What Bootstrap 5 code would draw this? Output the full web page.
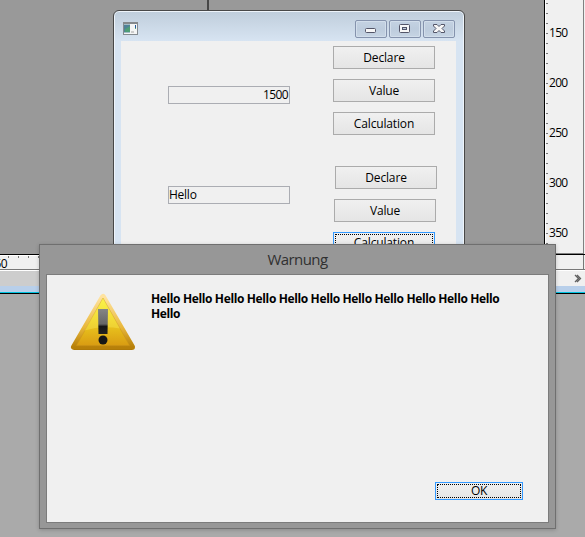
<!DOCTYPE html>
<html lang="de">
<head>
<meta charset="utf-8">
<title>Warnung</title>
<link href="https://cdn.jsdelivr.net/npm/bootstrap@5.3.0/dist/css/bootstrap.min.css" rel="stylesheet">
<style>
body{width:585px;height:537px;background:#aaa;font-family:"Open Sans","Noto Sans",sans-serif;font-size:12px;line-height:16px;color:#000}
.desk{width:585px;height:537px}
.upper{height:254px;background:#999}
.guide{width:2px;height:10px;background:#484848;margin-left:207px}
.vruler{width:41px;background:#f0f0f0;border-left:1px solid #000;box-shadow:inset 1px 0 #fff}
.vruler .scale{width:39px;border-right:1px solid #808080;border-bottom:1px solid #808080;padding-top:3px}
.mk{height:50px;padding-left:1px}
.mk svg{flex:none;width:2px;height:50px}
.mk span{margin:22px 0 0 1px;letter-spacing:-.7px}
.strip{height:16px;background:#f0f0f0;border-top:1px solid #000;border-bottom:1px solid #777}
.strip svg{width:39px;height:14px;display:block}
.hnum{width:7px;letter-spacing:-.6px;direction:rtl;margin-right:-7px;line-height:17px;z-index:1}
.hnum bdi{direction:ltr}
.corner{width:28px;border-right:1px solid #777;margin-right:1px}
.scroll{height:16px;background:linear-gradient(90deg,#cdcdcd 300px,#f0f0f0 300px);border-top:1px solid #fff;padding-right:3px}
.edge{height:8px;background:#b8cfea;border-bottom:1px solid #000;box-shadow:inset 0 -1px #00c3e0}
.app{left:113px;top:10px;width:352px;height:260px;background:linear-gradient(#bfcddb,#d7e4f2 30px);border:1px solid #484848;border-radius:6px 6px 0 0;box-shadow:inset 0 0 0 1px #eef4fa;padding:0 7px}
.bar{height:30px;padding-right:2px}
.appicon{margin:11px auto 0 2px}
.caps{margin-top:9px;gap:2px}
.stack{gap:10px}
.cap{width:32px;height:18px;border:1px solid #8593ad;border-radius:2px;background:linear-gradient(#c4d2e2,#bdccdd 50%,#c6d4e3);box-shadow:inset 0 0 0 1px #d2deeb}
.cap svg,.appicon{display:block}
.client{height:229px;background:#f0f0f0;margin-right:1px}
.fields{width:169px;padding:45px 0 0 47px}
.field{width:122px;height:18px;border:1px solid #abadb3;border-radius:0;background:#f0f0f0;font-size:12px;line-height:16px;padding:0 1px 0 0;color:#000;letter-spacing:-.25px}
.field+.field{margin-top:82px}
.field.text-end{letter-spacing:-.6px}
.cmds{padding:5px 0 0 43px}
.cmd{width:102px;height:23px;flex:none;padding:0 0 1px;border:1px solid #ababab;border-radius:0;background:linear-gradient(#f0f0f0,#e5e5e5);font-size:12px;line-height:19px;color:#000;letter-spacing:-.15px}
.g2{padding:31px 0 0 2px}
.g2 .cmd:nth-child(2){margin-left:-1px}
.g2 .cmd:nth-child(3){margin-left:-2px}
.foc{border-color:#3399ff;padding:0}
.foc i{display:block;height:calc(100% - 2px);margin:1px;border:1px dotted #000;font-style:normal;line-height:16px}
.dlg{left:39px;top:244px;width:517px;height:285px;background:#979797;border:1px solid #6f6f6f;padding:0 6px 6px;box-shadow:0 1px 4px rgba(0,0,0,.2)}
.cappt{height:29px;font-size:15px;line-height:29px;color:#303030;letter-spacing:-.6px}
.pane{height:249px;background:#f0f0f0;border:1px solid #7c7c7c}
.msg{font-weight:700;line-height:15px;margin:16px 0 0 15px;width:368px;letter-spacing:-.37px}
.warn{margin:17px 0 0 23px;display:block;flex:none}
.okb{width:88px;height:18px;margin:0 25px 22px 0}
.okb i{line-height:12px;letter-spacing:-.3px}
</style>
<script src="https://cdn.jsdelivr.net/npm/bootstrap@5.3.0/dist/js/bootstrap.bundle.min.js"></script>
</head>
<body class="overflow-hidden">
<div class="desk position-relative overflow-hidden">
  <div class="upper d-flex justify-content-between">
    <div class="guide"></div>
    <div class="vruler overflow-hidden"><div class="scale h-100 overflow-hidden">
      <div class="mk d-flex"><svg><path d="M0 .5h2M0 10.5h2M0 20.5h2M0 30.5h2M0 40.5h2" stroke="#777"/></svg><span>150</span></div>
      <div class="mk d-flex"><svg><path d="M0 .5h2M0 10.5h2M0 20.5h2M0 30.5h2M0 40.5h2" stroke="#777"/></svg><span>200</span></div>
      <div class="mk d-flex"><svg><path d="M0 .5h2M0 10.5h2M0 20.5h2M0 30.5h2M0 40.5h2" stroke="#777"/></svg><span>250</span></div>
      <div class="mk d-flex"><svg><path d="M0 .5h2M0 10.5h2M0 20.5h2M0 30.5h2M0 40.5h2" stroke="#777"/></svg><span>300</span></div>
      <div class="mk d-flex"><svg><path d="M0 .5h2M0 10.5h2M0 20.5h2M0 30.5h2M0 40.5h2" stroke="#777"/></svg><span>350</span></div>
    </div></div>
  </div>
  <div class="strip d-flex">
    <div class="hnum"><bdi>50</bdi></div>
    <svg><path d="M0 .5h39" stroke="#fff"/><path d="M8.5 1v2M18.5 1v2M28.5 1v2M38.5 1v2" stroke="#777"/></svg>
    <div class="corner ms-auto"></div>
  </div>
  <div class="scroll d-flex justify-content-end align-items-center"><svg width="8" height="9"><path d="M1 1l3.500 3.500L1 8M3 1l3.500 3.500L3 8" fill="none" stroke="#606060" stroke-width="1.300"/></svg></div>
  <div class="edge"></div>

  <div class="app position-absolute">
    <div class="bar d-flex align-items-start">
      <svg class="appicon" width="16" height="14"><rect x=".5" y=".5" width="14" height="12" fill="#f4f5f5" stroke="#858b90"/><path d="M0 1h15" stroke="#85898c" stroke-width="2"/><rect x="1" y="2.5" width="6" height="8" fill="#4f8297"/><path d="M2 10V7l2-1 3-2v6z" fill="#4e9d76"/><path d="M12.5 3v3" stroke="#225b9d"/><path d="M12.5 6v1" stroke="#5aac75"/><path d="M8 10h3" stroke="#ccc" stroke-width="2"/></svg>
      <div class="caps d-flex">
        <div class="cap"><svg width="30" height="16"><rect x="9.5" y="7.5" width="10" height="4" rx="1" fill="#f7f7f7" stroke="#535568"/></svg></div>
        <div class="cap"><svg width="30" height="16"><rect x="9.5" y="3.5" width="10" height="8" rx="1" fill="#f7f7f7" stroke="#535568"/><rect x="12.5" y="6.5" width="4" height="2" fill="#bfccdc" stroke="#535568"/></svg></div>
        <div class="cap"><svg width="30" height="16"><path d="M9.500 3.500h3.500l2 2 2-2h3.500v1.500L18 7.500l2.500 2.500v1.500H17l-2-2-2 2H9.500V10L12 7.500 9.500 5z" fill="#f7f7f7" stroke="#535568"/></svg></div>
      </div>
    </div>
    <div class="client d-flex overflow-hidden">
      <div class="fields"><div class="form-control field text-end">1500</div><div class="form-control field">Hello</div></div>
      <div class="cmds">
        <div class="stack d-flex flex-column"><button class="btn cmd">Declare</button><button class="btn cmd">Value</button><button class="btn cmd">Calculation</button></div>
        <div class="g2 stack d-flex flex-column"><button class="btn cmd">Declare</button><button class="btn cmd">Value</button><button class="btn cmd foc"><i>Calculation</i></button></div>
      </div>
    </div>
  </div>

  <div class="dlg position-absolute">
    <div class="cappt text-center">Warnung</div>
    <div class="pane d-flex flex-column">
      <div class="d-flex">
        <svg class="warn" width="66" height="60" viewBox="0 0 66 60">
          <defs>
            <linearGradient id="g" x1="0" y1="0" x2="0" y2="1"><stop offset="0" stop-color="#f8f23c"/><stop offset=".5" stop-color="#eccb20"/><stop offset="1" stop-color="#d99c12"/></linearGradient>
            <linearGradient id="r" x1="0" y1="0" x2="0" y2="1"><stop offset="0" stop-color="#ffe3a0"/><stop offset=".6" stop-color="#e9b83c"/><stop offset="1" stop-color="#b78009"/></linearGradient>
            <linearGradient id="k" x1="0" y1="0" x2="0" y2="1"><stop offset="0" stop-color="#858585"/><stop offset=".6" stop-color="#666"/><stop offset=".7" stop-color="#161616"/><stop offset="1" stop-color="#222"/></linearGradient>
          </defs>
          <path d="M33 5L4 55H62z" fill="url(#r)" stroke="url(#r)" stroke-width="6" stroke-linejoin="round"/>
          <path d="M33 6L6.500 53.500h53z" fill="url(#g)" stroke="#c99319" stroke-opacity=".45"/>
          <path d="M33 6L14.500 38.500Q32 33 50 36.500z" fill="#fff76a" opacity=".3"/>
          <path d="M28 17h10l-.5 25h-9z" fill="url(#k)"/>
          <circle cx="33" cy="48" r="4.500" fill="#161616"/>
          <path d="M4 57.500h58" stroke="#a87508" stroke-opacity=".6"/>
        </svg>
        <div class="msg">Hello Hello Hello Hello Hello Hello Hello Hello Hello Hello Hello Hello</div>
      </div>
      <button class="btn cmd foc okb mt-auto ms-auto"><i>OK</i></button>
    </div>
  </div>
</div>
</body>
</html>
